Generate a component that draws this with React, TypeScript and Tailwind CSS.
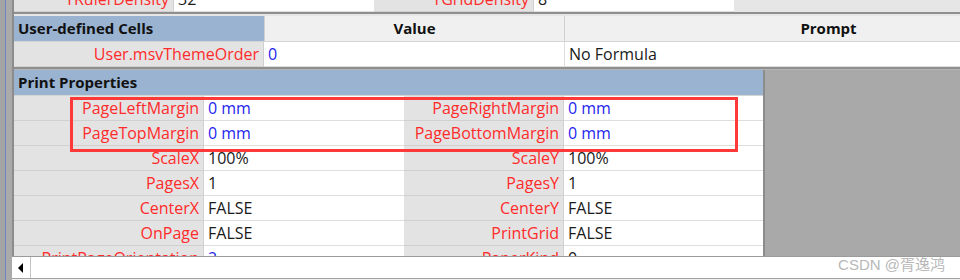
import React from "react";

type PRow = [string, string, boolean, string, string, boolean];

const printRows: PRow[] = [
  ["PageLeftMargin", "0 mm", true, "PageRightMargin", "0 mm", true],
  ["PageTopMargin", "0 mm", true, "PageBottomMargin", "0 mm", true],
  ["ScaleX", "100%", false, "ScaleY", "100%", false],
  ["PagesX", "1", false, "PagesY", "1", false],
  ["CenterX", "FALSE", false, "CenterY", "FALSE", false],
  ["OnPage", "FALSE", false, "PrintGrid", "FALSE", false],
  ["PrintPageOrientation", "2", true, "PaperKind", "0", false],
];

function Label({ w, text }: { w: string; text: string }) {
  return (
    <div
      className={`${w} shrink-0 h-full bg-[#e3e3e3] border-b border-r border-[#d0d0d0] text-right pr-[4px] text-[#ff2b2b] whitespace-nowrap overflow-hidden leading-[24px]`}
    >
      {text}
    </div>
  );
}

function Value({ w, text, blue }: { w: string; text: string; blue: boolean }) {
  return (
    <div
      className={`${w} shrink-0 h-full bg-white border-b border-[#dedede] pl-[4px] whitespace-nowrap overflow-hidden leading-[24px] ${
        blue ? "text-[#1f1fee]" : "text-[#1a1a1a]"
      }`}
    >
      {text}
    </div>
  );
}

export default function App() {
  return (
    <div className="relative w-[960px] h-[280px] overflow-hidden bg-[#a9a9a9] flex font-['Open_Sans','Noto_Sans',sans-serif] text-[16px]">
      {/* left strip */}
      <div className="w-[12px] shrink-0 h-full flex">
        <div className="w-[5px] h-full bg-[#a4a4a4]" />
        <div className="w-[1px] h-full bg-[#6f82c6]" />
        <div className="w-[6px] h-full bg-[#aaaaaa]" />
      </div>

      <div className="flex-1 min-w-0 flex flex-col h-full">
        {/* content */}
        <div className="flex-1 min-h-0 overflow-hidden border-l-2 border-[#8c8c8c] flex flex-col">
          {/* top partial section */}
          <div className="h-[12px] shrink-0 overflow-hidden">
            <div className="flex h-[25px] -mt-[13px]">
              <Label w="w-[160px]" text="YRulerDensity" />
              <Value w="w-[200px]" text="32" blue={false} />
              <Label w="w-[160px]" text="YGridDensity" />
              <Value w="w-[200px]" text="8" blue={false} />
              <div className="flex-1 h-full bg-[#e6e6e6]" />
            </div>
          </div>
          <div className="h-[2px] shrink-0 bg-[#8f8f8f]" />
          <div className="h-[2px] shrink-0 bg-[#e6e6e6]" />

          {/* user-defined cells */}
          <div className="shrink-0 flex flex-col">
            <div className="flex h-[26px] border-b border-[#d4d4d4] text-[15px]">
              <div className="w-[250px] shrink-0 bg-[#99b3d1] pl-[4px] font-bold text-[#111] leading-[25px] whitespace-nowrap">
                User-defined Cells
              </div>
              <div className="w-[300px] shrink-0 bg-[#f0f0f0] border-l border-[#d0d0d0] text-center font-bold text-[#111] leading-[25px]">
                Value
              </div>
              <div className="w-[528px] shrink-0 bg-[#f0f0f0] border-l border-[#d0d0d0] text-center font-bold text-[#111] leading-[25px]">
                Prompt
              </div>
            </div>
            <div className="flex h-[25px]">
              <Label w="w-[250px]" text="User.msvThemeOrder" />
              <Value w="w-[300px]" text="0" blue={true} />
              <div className="w-[528px] shrink-0 h-full bg-white border-b border-l border-[#dedede] pl-[4px] text-[#1a1a1a] leading-[24px] whitespace-nowrap">
                No Formula
              </div>
            </div>
          </div>
          <div className="h-[2px] shrink-0 bg-[#8f8f8f]" />
          <div className="h-[1px] shrink-0 bg-[#b4b4b4]" />

          {/* print properties */}
          <div className="flex-1 min-h-0 flex">
            <div className="w-[751px] shrink-0 flex flex-col border-r-2 border-[#8c8c8c]">
              <div className="h-[26px] shrink-0 bg-[#99b3d1] border-b border-[#d4d4d4] pl-[4px] font-bold text-[15px] text-[#111] leading-[25px]">
                Print Properties
              </div>
              {printRows.map((r) => (
                <div key={r[0]} className="flex h-[25px] shrink-0">
                  <Label w="w-[190px]" text={r[0]} />
                  <Value w="w-[200px]" text={r[1]} blue={r[2]} />
                  <Label w="w-[160px]" text={r[3]} />
                  <Value w="w-[199px]" text={r[4]} blue={r[5]} />
                </div>
              ))}
            </div>
            <div className="flex-1" />
          </div>
        </div>

        {/* horizontal scrollbar */}
        <div className="h-[24px] shrink-0 flex flex-col">
          <div className="h-[1px] bg-[#9a9a9a]" />
          <div className="h-[21px] bg-white flex">
            <div className="w-[19px] h-full border-r border-[#c4c4c4] flex items-center justify-center">
              <svg width="6" height="10" viewBox="0 0 6 10">
                <polygon points="5,0 5,10 0,5" fill="#000" />
              </svg>
            </div>
            <div className="flex-1" />
          </div>
          <div className="h-[1px] bg-[#a0a0a0]" />
          <div className="h-[1px] bg-[#f0f0f0]" />
        </div>
      </div>

      {/* annotation rectangle */}
      <div className="absolute left-[70px] top-[97px] w-[668px] h-[55px] border-[3px] border-[#ff3838]" />

      {/* watermark */}
      <div className="absolute right-[15px] bottom-[7px] text-[15px] leading-[16px] font-normal text-[#b8b8b8] font-['Liberation_Sans','Noto_Sans_CJK_SC',sans-serif] whitespace-nowrap">
        CSDN @胥逸鸿
      </div>
    </div>
  );
}
